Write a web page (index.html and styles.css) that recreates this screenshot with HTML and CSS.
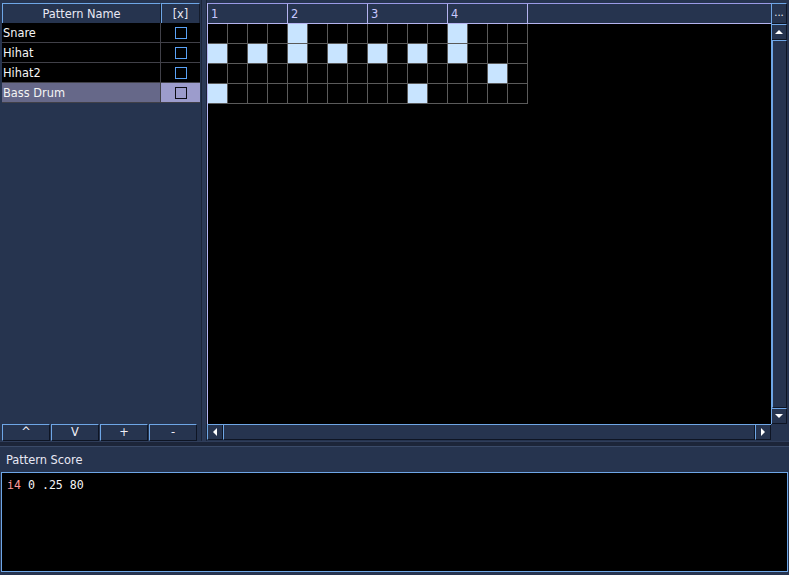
FILE: index.html
```
<!DOCTYPE html>
<html>
<head>
<meta charset="utf-8">
<link rel="stylesheet" href="styles.css">
</head>
<body>
<div class="app">
  <div class="top">
    <div class="left">
      <div class="table">
        <div class="thead">
          <div class="th th-name">Pattern Name</div>
          <div class="th th-chk">[x]</div>
        </div>
        <div class="row"><div class="cell-name">Snare</div><div class="cell-chk"><span class="box"></span></div></div>
        <div class="row"><div class="cell-name">Hihat</div><div class="cell-chk"><span class="box"></span></div></div>
        <div class="row"><div class="cell-name">Hihat2</div><div class="cell-chk"><span class="box"></span></div></div>
        <div class="row sel"><div class="cell-name">Bass Drum</div><div class="cell-chk"><span class="box"></span></div></div>
      </div>
      <div class="spacer"></div>
      <div class="btns">
        <div class="btn">^</div>
        <div class="btn">V</div>
        <div class="btn">+</div>
        <div class="btn">-</div>
      </div>
    </div>
    <div class="vsplit"></div>
    <div class="right">
      <div class="gridwrap">
        <div class="ghead">
          <div class="gh">1</div><div class="gh">2</div><div class="gh">3</div><div class="gh">4</div>
        </div>
        <div class="gbody">
          <div class="grow">
            <i></i><i></i><i></i><i></i><i class="on"></i><i></i><i></i><i></i><i></i><i></i><i></i><i></i><i class="on"></i><i></i><i></i><i></i>
          </div>
          <div class="grow">
            <i class="on"></i><i></i><i class="on"></i><i></i><i class="on"></i><i></i><i class="on"></i><i></i><i class="on"></i><i></i><i class="on"></i><i></i><i class="on"></i><i></i><i></i><i></i>
          </div>
          <div class="grow">
            <i></i><i></i><i></i><i></i><i></i><i></i><i></i><i></i><i></i><i></i><i></i><i></i><i></i><i></i><i class="on"></i><i></i>
          </div>
          <div class="grow">
            <i class="on"></i><i></i><i></i><i></i><i></i><i></i><i></i><i></i><i></i><i></i><i class="on"></i><i></i><i></i><i></i><i></i><i></i>
          </div>
        </div>
      </div>
      <div class="vscroll">
        <div class="sbtn dots">...</div>
        <div class="sbtn"><span class="tri up"></span></div>
        <div class="thumb"></div>
        <div class="sbtn"><span class="tri down"></span></div>
      </div>
      <div class="hscroll">
        <div class="sbtn"><span class="tri lft"></span></div>
        <div class="thumb"></div>
        <div class="sbtn"><span class="tri rgt"></span></div>
      </div>
      <div class="corner"></div>
    </div>
  </div>
  <div class="hsplit"></div>
  <div class="bottom">
    <div class="label">Pattern Score</div>
    <div class="score"><span class="op">i4</span> 0 .25 80</div>
  </div>
</div>
</body>
</html>
```
FILE: styles.css
```
* { box-sizing: border-box; }
html, body { margin: 0; padding: 0; }
body {
  width: 789px;
  height: 575px;
  overflow: hidden;
  background: #1c2539;
  font-family: "DejaVu Sans", sans-serif;
  font-size: 11.4px;
  color: #f0f0f8;
}
.app {
  width: 789px;
  height: 575px;
  display: flex;
  flex-direction: column;
}
.top {
  height: 441px;
  display: flex;
  background: #26344f;
}
.left {
  width: 201px;
  padding: 3px 0 0 2px;
  display: flex;
  flex-direction: column;
}
.table { width: 198px; }
.thead { display: flex; height: 20px; }
.th {
  height: 20px;
  background: #26344f;
  border-top: 1px solid #6ea6e6;
  border-left: 1px solid #6ea6e6;
  border-right: 1px solid #141c2c;
  display: flex;
  align-items: center;
  justify-content: center;
  padding-top: 1px;
  color: #e8e8f4;
}
.th-name { width: 159px; }
.th-chk { width: 39px; }
.row {
  display: flex;
  height: 20px;
  background: #000;
  border-bottom: 1px solid #404048;
}
.cell-name {
  width: 159px;
  padding: 1px 0 0 1px;
  display: flex;
  align-items: center;
  border-right: 1px solid #404048;
  color: #f4f4f4;
}
.cell-chk {
  width: 39px;
  display: flex;
  align-items: center;
  justify-content: center;
}
.box {
  width: 12px;
  height: 12px;
  border: 1px solid #5aa2f6;
}
.row.sel { background: #666889; }
.row.sel .cell-chk { background: #9c9ccc; }
.row.sel .box { border-color: #0c0c14; }
.spacer { flex: 1; }
.btns {
  height: 17px;
  display: flex;
  gap: 1px;
}
.btn {
  width: 48px;
  height: 17px;
  background: #26344f;
  border-top: 1px solid #6ea6e6;
  border-left: 1px solid #6ea6e6;
  border-right: 1px solid #0e1524;
  border-bottom: 1px solid #0e1524;
  display: flex;
  align-items: center;
  justify-content: center;
  line-height: 1;
  color: #f0f0f8;
}
.vsplit {
  width: 6px;
  background: #2b3956;
  border-left: 1px solid #1b2438;
  border-right: 1px solid #1b2438;
}
.right {
  width: 582px;
  padding: 3px 2px 1px 0;
  display: grid;
  grid-template-columns: 564px 16px;
  grid-template-rows: 421px 16px;
}
.gridwrap {
  background: #000;
  border-left: 1px solid #b4b4f0;
  overflow: hidden;
}
.ghead {
  height: 21px;
  display: flex;
  background: #26344f;
  border-top: 1px solid #9a9ae6;
  border-bottom: 1px solid #b4b4f0;
}
.gh {
  width: 80px;
  border-right: 1px solid #b4b4f0;
  color: #c8c8ff;
  padding: 3px 0 0 3px;
}
.gbody { width: 320px; }
.grow {
  display: flex;
  height: 20px;
  border-bottom: 1px solid #5a5a5a;
}
.grow i {
  width: 20px;
  height: 19px;
  border-right: 1px solid #5a5a5a;
  display: block;
}
.grow i.on { background: #c8e4ff; }
.vscroll {
  display: flex;
  flex-direction: column;
  border-left: 1px solid #6ea6e6;
}
.sbtn {
  height: 16px;
  flex: none;
  width: 100%;
  background: #26344f;
  border-top: 1px solid #6ea6e6;
  border-right: 1px solid #0e1524;
  border-bottom: 1px solid #0e1524;
  display: flex;
  align-items: center;
  justify-content: center;
}
.sbtn.dots {
  height: 21px;
  color: #f0f0f8;
  font-size: 10px;
  align-items: flex-end;
  padding-bottom: 5px;
}
.thumb {
  flex: 1;
  background: #26344f;
  border: 1px solid #6ea6e6;
  border-right-color: #0e1524;
  border-bottom-color: #0e1524;
}
.hscroll {
  display: flex;
  border-top: 1px solid #6ea6e6;
}
.hscroll .sbtn {
  width: 16px;
  height: 15px;
  border-top: none;
  border-left: 1px solid #6ea6e6;
}
.hscroll .thumb { border-top: none; }
.corner { background: #26344f; }
.tri { width: 0; height: 0; display: block; }
.tri.up { border-left: 4px solid transparent; border-right: 4px solid transparent; border-bottom: 4px solid #fff; }
.tri.down { border-left: 4px solid transparent; border-right: 4px solid transparent; border-top: 4px solid #fff; }
.tri.lft { border-top: 4px solid transparent; border-bottom: 4px solid transparent; border-right: 4px solid #fff; }
.tri.rgt { border-top: 4px solid transparent; border-bottom: 4px solid transparent; border-left: 4px solid #fff; }
.hsplit {
  height: 6px;
  background: #1c2539;
  border-top: 1px solid #2f3d5a;
  border-bottom: 1px solid #3a4a68;
}
.bottom {
  flex: 1;
  display: flex;
  flex-direction: column;
  background: #26344f;
}
.label {
  height: 25px;
  padding: 1px 0 0 6px;
  display: flex;
  align-items: center;
  color: #e8e8f4;
}
.score {
  height: 100px;
  margin: 0 1px;
  background: #000;
  border: 1px solid #6ea6e6;
  padding: 5px 0 0 5px;
  color: #f4f4f4;
  font-family: "DejaVu Sans Mono", monospace;
  font-size: 11.6px;
}
.op { color: #ff9a9a; }
```
